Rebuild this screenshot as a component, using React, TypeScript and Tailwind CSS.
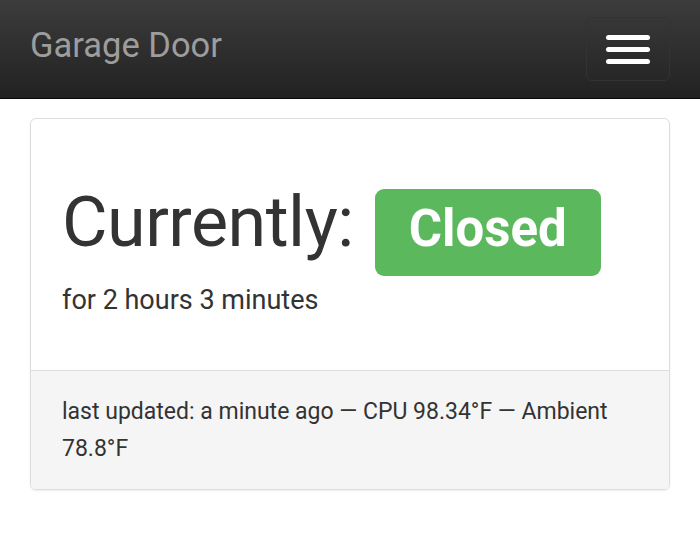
export default function App() {
  return (
    <div className="min-h-[550px] bg-white" style={{ fontFamily: "Roboto, 'Liberation Sans', sans-serif" }}>
      <nav className="h-[99px] border-b border-[#080808] bg-gradient-to-b from-[#3c3c3c] to-[#222222] flex items-center justify-between pl-[30px] pr-[30px]">
        <span className="text-[34.5px] text-[#9d9d9d] leading-none mb-[8px]">Garage Door</span>
        <button className="w-[84px] h-[64px] rounded-[6px] border border-[#333333] flex flex-col items-center justify-center gap-[7px]">
          <span className="block w-[44px] h-[5px] rounded-full bg-white" />
          <span className="block w-[44px] h-[5px] rounded-full bg-white" />
          <span className="block w-[44px] h-[5px] rounded-full bg-white" />
        </button>
      </nav>
      <div className="px-[30px] pt-[19px]">
        <div className="border border-[#dddddd] rounded-[6px] shadow-[0_1px_2px_rgba(0,0,0,0.08)] overflow-hidden">
          <div className="px-[31px] pt-[68px] pb-[51px]">
            <div className="flex items-baseline">
              <h1 className="text-[70px] leading-none text-[#333333] font-normal tracking-[-0.5px]">Currently:</h1>
              <span className="ml-[21px] inline-block bg-[#5cb85c] text-white font-bold text-[51px] leading-none rounded-[9px] px-[34px] pt-[14px] pb-[22px]">Closed</span>
            </div>
            <p className="mt-[6px] text-[27px] text-[#333333] leading-[37px]">for 2 hours 3 minutes</p>
          </div>
          <div className="bg-[#f5f5f5] border-t border-[#dddddd] px-[31px] pt-[22px] pb-[22px] text-[23px] leading-[37px] text-[#333333]">
            last updated: a minute ago — CPU 98.34°F — Ambient 78.8°F
          </div>
        </div>
      </div>
    </div>
  );
}
